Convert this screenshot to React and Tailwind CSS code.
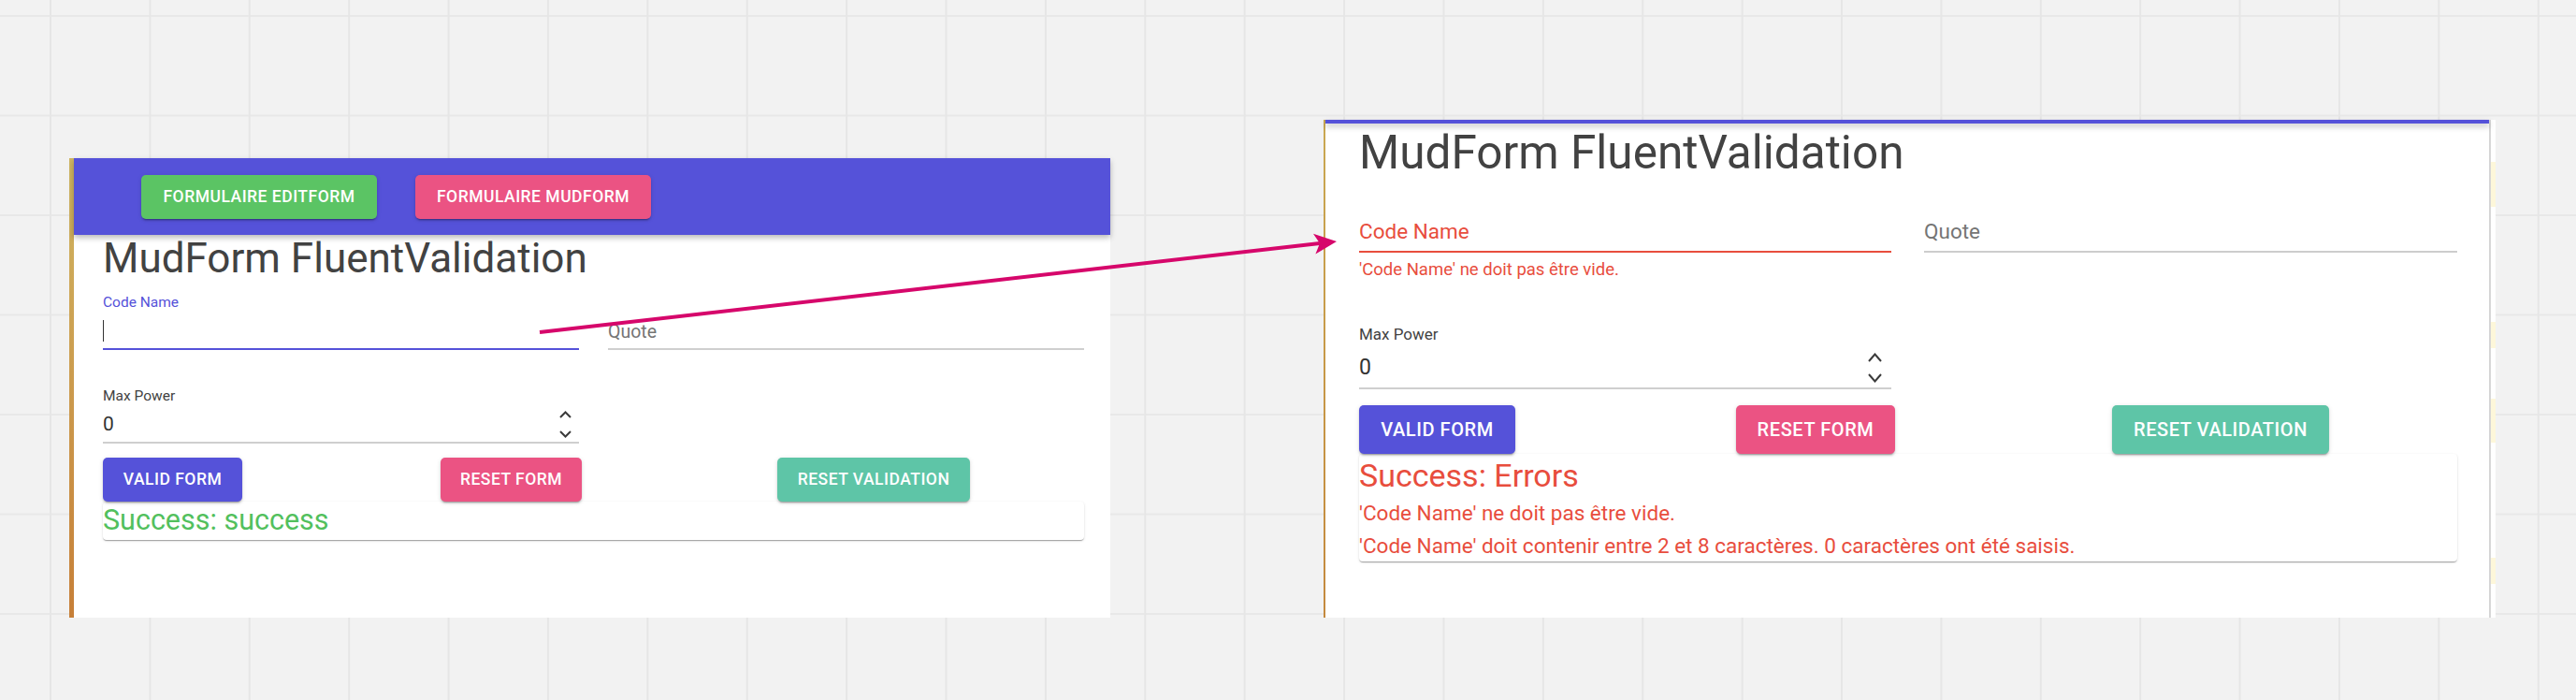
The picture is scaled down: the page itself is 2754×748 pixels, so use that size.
import React from 'react';

const btnBase =
  'flex items-center justify-center rounded-[5px] font-medium uppercase tracking-[0.02857em] text-white shadow-[0_3px_1px_-2px_rgba(0,0,0,0.2),0_2px_2px_0_rgba(0,0,0,0.14),0_1px_5px_0_rgba(0,0,0,0.12)]';

const cardShadow =
  'shadow-[0_2px_1px_-1px_rgba(0,0,0,0.2),0_1px_1px_0_rgba(0,0,0,0.14),0_1px_3px_0_rgba(0,0,0,0.12)]';

function Spinner({ w, h, gap }) {
  return (
    <div className="flex flex-col" style={{ gap }}>
      <svg width={w} height={h} viewBox={`0 0 ${w} ${h}`} fill="none">
        <polyline points={`1,${h - 1} ${w / 2},1.5 ${w - 1},${h - 1}`} stroke="#3a3a3a" strokeWidth="2" />
      </svg>
      <svg width={w} height={h} viewBox={`0 0 ${w} ${h}`} fill="none">
        <polyline points={`1,1 ${w / 2},${h - 1.5} ${w - 1},1`} stroke="#3a3a3a" strokeWidth="2" />
      </svg>
    </div>
  );
}

function LeftPanel() {
  return (
    <div className="mt-[169px] flex h-[491px] w-[1113px] shrink-0 bg-white">
      <div className="w-[5px] shrink-0 bg-linear-to-b from-[#cfb662] to-[#c67f38]" />
      <div className="flex min-w-0 flex-1 flex-col">
        <div className="relative z-10 flex h-[82px] gap-[41px] bg-[#5552d9] pl-[72px] pt-[18px] shadow-[0_3px_6px_rgba(0,0,0,0.28)]">
          <button className={`${btnBase} h-[47px] w-[252px] bg-[#5bc464] text-[17.5px]`}>Formulaire EditForm</button>
          <button className={`${btnBase} h-[47px] w-[252px] bg-[#eb5383] text-[17.5px]`}>Formulaire MudForm</button>
        </div>

        <div className="pl-[31px] pr-[28px]">
          <h3 className="text-[44px] leading-[50px] text-[#424242]">MudForm FluentValidation</h3>

          <div className="flex gap-[31px]">
            <div className="flex h-[73px] w-[509px] flex-col">
              <label className="mt-[13px] text-[15.5px] leading-[18px] text-[#5552d9]">Code Name</label>
              <span className="mt-[10px] h-[23px] w-px bg-[#333]" />
              <div className="mt-auto h-[2px] bg-[#5552d9]" />
            </div>
            <div className="flex h-[73px] w-[509px] flex-col justify-end">
              <span className="text-[19.5px] leading-[23px] text-[#757575]">Quote</span>
              <div className="mt-[6px] h-[2px] bg-[#cfcfcf]" />
            </div>
          </div>

          <div className="w-[509px]">
            <div className="mt-[40px] text-[15.5px] leading-[18px] text-[#424242]">Max Power</div>
            <div className="mt-[9px] flex h-[25px] items-center justify-between pr-[8px]">
              <span className="text-[21px] leading-[25px] text-[#333]">0</span>
              <Spinner w={13} h={8} gap={13} />
            </div>
            <div className="mt-[6px] h-[2px] bg-[#cfcfcf]" />
          </div>

          <div className="relative z-10 mt-[15px] grid grid-cols-[361px_360px_1fr]">
            <div><button className={`${btnBase} h-[47px] w-[149px] bg-[#5552d9] text-[17.5px]`}>Valid Form</button></div>
            <div><button className={`${btnBase} h-[47px] w-[151px] bg-[#eb5383] text-[17.5px]`}>Reset Form</button></div>
            <div><button className={`${btnBase} h-[47px] w-[206px] bg-[#5ec5a7] text-[17.5px]`}>Reset Validation</button></div>
          </div>

          <div className={`h-[41px] w-full rounded-[4px] bg-white pt-[2px] ${cardShadow}`}>
            <div className="text-[30.5px] leading-[35px] text-[#52c05d]">Success: success</div>
          </div>
        </div>
      </div>
    </div>
  );
}

function RightPanel() {
  return (
    <div className="ml-[228px] mt-[128px] flex h-[532px] shrink-0">
      <div className="w-[2px] shrink-0 bg-linear-to-b from-[#c9a852] to-[#c4893e]" />
      <div className="flex w-[1244px] shrink-0 flex-col bg-white">
        <div className="relative z-10 h-[4px] bg-[#5552d9] shadow-[0_3px_6px_rgba(0,0,0,0.28)]" />
        <div className="pl-[36px] pr-[34px]">
          <h3 className="mt-[3px] text-[49.5px] leading-[56px] text-[#424242]">MudForm FluentValidation</h3>

          <div className="flex gap-[35px]">
            <div className="w-[569px]">
              <div className="mt-[43px] text-[22.5px] leading-[27px] text-[#e84d3d]">Code Name</div>
              <div className="mt-[7px] h-[2px] bg-[#e84d3d]" />
              <div className="mt-[8px] text-[18.5px] leading-[20px] text-[#e84d3d]">'Code Name' ne doit pas être vide.</div>
            </div>
            <div className="w-[570px]">
              <div className="mt-[43px] text-[22.5px] leading-[27px] text-[#757575]">Quote</div>
              <div className="mt-[7px] h-[2px] bg-[#cdcdcd]" />
            </div>
          </div>

          <div className="w-[569px]">
            <div className="mt-[49px] text-[17px] leading-[20px] text-[#424242]">Max Power</div>
            <div className="mt-[12px] flex h-[27px] items-center justify-between pr-[10px]">
              <span className="text-[23px] leading-[27px] text-[#333]">0</span>
              <Spinner w={15} h={10} gap={12} />
            </div>
            <div className="mt-[8px] h-[2px] bg-[#cfcfcf]" />
          </div>

          <div className="relative z-10 mt-[17px] grid grid-cols-[403px_402px_1fr]">
            <div><button className={`${btnBase} h-[52px] w-[167px] bg-[#5552d9] text-[20px]`}>Valid Form</button></div>
            <div><button className={`${btnBase} h-[52px] w-[170px] bg-[#eb5383] text-[20px]`}>Reset Form</button></div>
            <div><button className={`${btnBase} h-[52px] w-[232px] bg-[#5ec5a7] text-[20px]`}>Reset Validation</button></div>
          </div>

          <div className={`h-[115px] w-full rounded-[4px] bg-white pt-[2px] text-[#e84d3d] ${cardShadow}`}>
            <div className="text-[34px] leading-[42px]">Success: Errors</div>
            <div className="mt-[2px] text-[22.5px] leading-[35px]">'Code Name' ne doit pas être vide.</div>
            <div className="text-[22.5px] leading-[35px]">'Code Name' doit contenir entre 2 et 8 caractères. 0 caractères ont été saisis.</div>
          </div>
        </div>
      </div>
      <div className="w-[2px] bg-[#d6d6d6]" />
      <div className="flex w-[5px] flex-col bg-white">
        <div className="mt-[45px] h-[48px] bg-[#fdf7da]" />
        <div className="mt-[123px] h-[28px] bg-[#fdf7da]" />
        <div className="mt-[54px] h-[47px] bg-[#fdf7da]" />
        <div className="mt-[123px] h-[28px] bg-[#fdf7da]" />
      </div>
    </div>
  );
}

export default function App() {
  return (
    <div className="relative flex h-[748px] w-[2754px] items-start overflow-hidden bg-[#f2f2f2] bg-[image:linear-gradient(90deg,#e6e6e6_2px,transparent_2px),linear-gradient(180deg,#e8e8e8_2px,transparent_2px)] bg-[length:106.4px_106.5px] bg-[position:53px_16px] pl-[74px] font-['Roboto',sans-serif]">
      <LeftPanel />
      <RightPanel />

      <svg className="pointer-events-none absolute inset-0 z-20" width="2754" height="748" viewBox="0 0 2754 748">
        <line x1="577" y1="355" x2="1411" y2="260" stroke="#d6076b" strokeWidth="4" />
        <polygon points="1429,258 1404,249.8 1411,260 1406.4,271.6" fill="#d6076b" />
      </svg>
    </div>
  );
}
